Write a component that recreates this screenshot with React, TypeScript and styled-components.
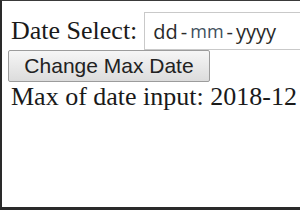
import * as React from 'react';
import styled, { createGlobalStyle } from 'styled-components';

const GlobalStyle = createGlobalStyle`
    html, body {
        margin: 0;
        padding: 0;
        background: #ffffff;
    }
`

const Frame = styled.div`
    box-sizing: border-box;
    width: 300px;
    height: 210px;
    overflow: hidden;
    background: #ffffff;
    border-top: 1px solid #3a3a3a;
    border-left: 2px solid #2a2a2a;
    border-bottom: 3px solid #2a2a2a;
    padding: 11px 0 0 6px;
    font-family: "Liberation Serif", "Times New Roman", serif;
    font-size: 26px;
    color: #1a1a1a;
`

const Row = styled.div`
    display: flex;
    align-items: center;
    gap: 7px;
    height: 38px;
    white-space: nowrap;
`

const Label = styled.span`
    margin-left: 3px;
    line-height: 30px;
`

const DateBox = styled.div`
    box-sizing: border-box;
    flex: none;
    width: 200px;
    height: 38px;
    display: flex;
    align-items: center;
    padding-left: 8px;
    border: 1px solid #c9c9c9;
    border-right: none;
    background: #ffffff;
    font-family: "Open Sans", "Liberation Sans", sans-serif;
    font-size: 20px;
    color: #2a2a2a;
`

const Segment = styled.span<{ active?: boolean }>`
    color: ${props => props.active ? '#3e4f5c' : '#2a2a2a'};
    font-size: ${props => props.active ? '18px' : '20px'};
`

const Sep = styled.span`
    padding: 0 3px;
`

const Button = styled.button`
    box-sizing: border-box;
    display: block;
    width: 202px;
    height: 32px;
    margin: 0;
    padding: 0;
    border: 1px solid #9c9c9c;
    border-radius: 2px;
    background: linear-gradient(#f6f6f6, #dcdcdc);
    font-family: "Liberation Sans", Arial, sans-serif;
    font-size: 21px;
    color: #222222;
    text-align: center;
`

const Result = styled.div`
    margin-left: 3px;
    line-height: 30px;
    white-space: nowrap;
`

export default function App() {
    const [maxDate, setMaxDate] = React.useState('2018-12');

    return (
        <>
            <GlobalStyle />
            <Frame>
                <Row>
                    <Label>Date Select:</Label>
                    <DateBox>
                        <Segment>dd</Segment>
                        <Sep>-</Sep>
                        <Segment active>mm</Segment>
                        <Sep>-</Sep>
                        <Segment>yyyy</Segment>
                    </DateBox>
                </Row>
                <Button onClick={() => setMaxDate('2018-12')}>Change Max Date</Button>
                <Result>Max of date input: {maxDate}</Result>
            </Frame>
        </>
    )
}
